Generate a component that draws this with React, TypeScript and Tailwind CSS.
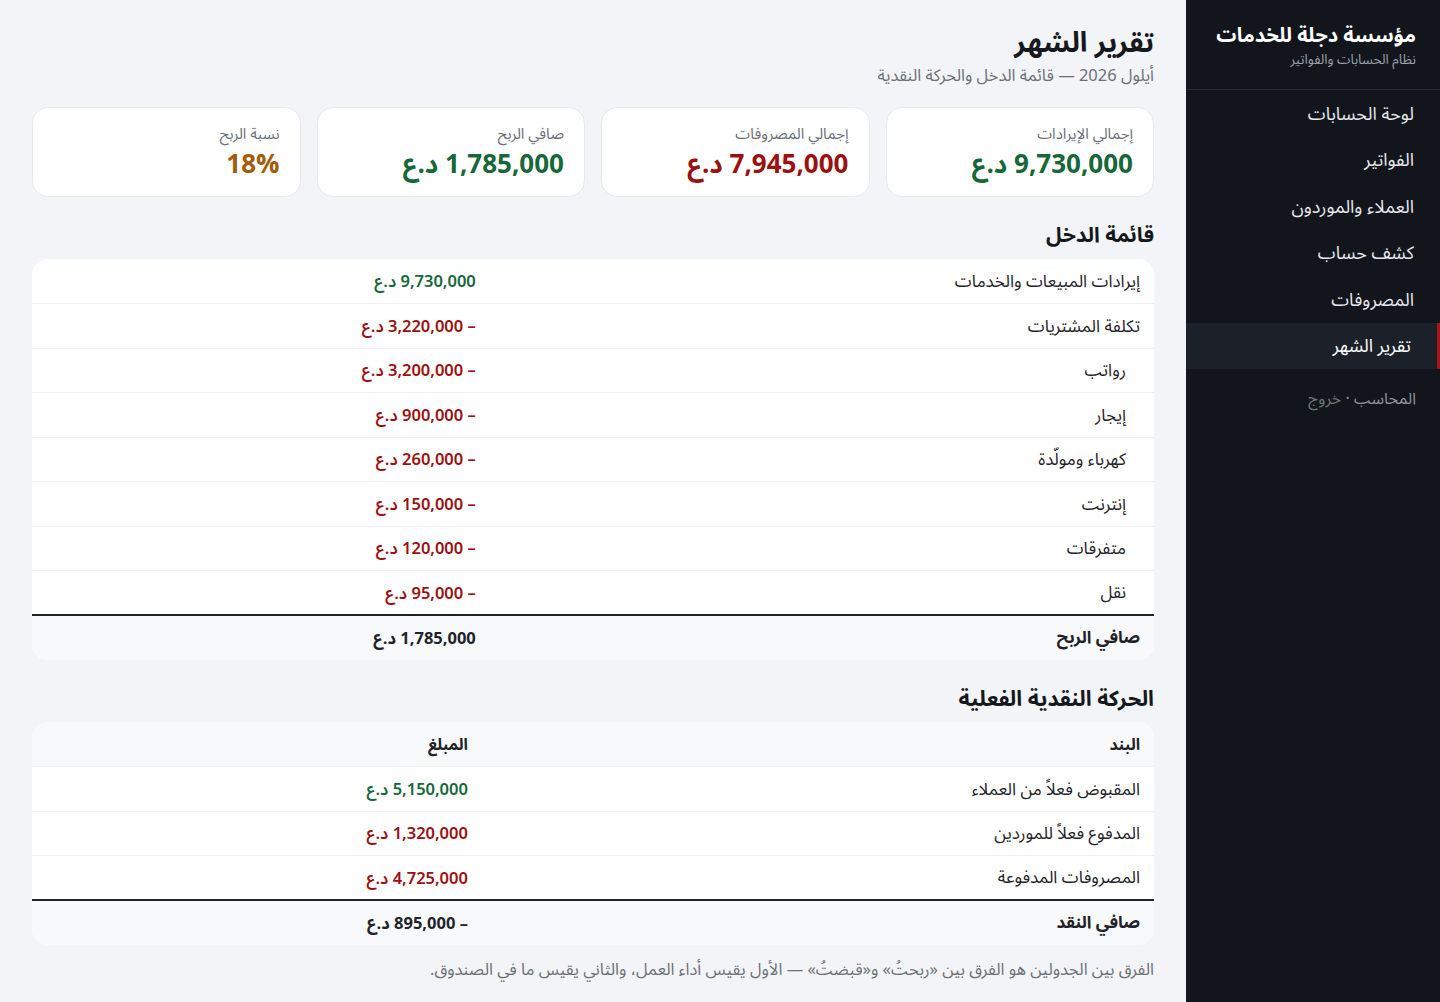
import React from 'react';

type Line = { label: string; amount: string; tone: 'green' | 'red' | 'dark'; sub?: boolean };

const incomeLines: Line[] = [
  { label: 'إيرادات المبيعات والخدمات', amount: '9,730,000 د.ع', tone: 'green' },
  { label: 'تكلفة المشتريات', amount: '– 3,220,000 د.ع', tone: 'red' },
  { label: 'رواتب', amount: '– 3,200,000 د.ع', tone: 'red', sub: true },
  { label: 'إيجار', amount: '– 900,000 د.ع', tone: 'red', sub: true },
  { label: 'كهرباء ومولّدة', amount: '– 260,000 د.ع', tone: 'red', sub: true },
  { label: 'إنترنت', amount: '– 150,000 د.ع', tone: 'red', sub: true },
  { label: 'متفرقات', amount: '– 120,000 د.ع', tone: 'red', sub: true },
  { label: 'نقل', amount: '– 95,000 د.ع', tone: 'red', sub: true },
];

const cashLines: Line[] = [
  { label: 'المقبوض فعلاً من العملاء', amount: '5,150,000 د.ع', tone: 'green' },
  { label: 'المدفوع فعلاً للموردين', amount: '1,320,000 د.ع', tone: 'red' },
  { label: 'المصروفات المدفوعة', amount: '4,725,000 د.ع', tone: 'red' },
];

const stats = [
  { label: 'إجمالي الإيرادات', value: '9,730,000 د.ع', color: 'text-[#17673a]' },
  { label: 'إجمالي المصروفات', value: '7,945,000 د.ع', color: 'text-[#9b1111]' },
  { label: 'صافي الربح', value: '1,785,000 د.ع', color: 'text-[#17673a]' },
  { label: 'نسبة الربح', value: '18%', color: 'text-[#a35c07]' },
];

const nav = ['لوحة الحسابات', 'الفواتير', 'العملاء والموردون', 'كشف حساب', 'المصروفات', 'تقرير الشهر'];

const toneClass = (t: Line['tone']) =>
  t === 'green' ? 'text-[#17673a]' : t === 'red' ? 'text-[#9b1111]' : 'text-[#1f2329]';

const Sidebar: React.FC = () => (
  <aside className="w-[254px] shrink-0 bg-[#12151b] text-[#e6e8ec]">
    <div className="h-[90px] border-b border-white/10 px-6 pt-[22px]">
      <h2 className="text-[20px] font-bold leading-7 text-white">مؤسسة دجلة للخدمات</h2>
      <p className="mt-[2px] text-[13.5px] leading-4 text-[#9aa0a9]">نظام الحسابات والفواتير</p>
    </div>
    <nav>
      {nav.map((item, i) => {
        const active = i === nav.length - 1;
        return (
          <div
            key={item}
            className={`flex h-[46.5px] items-center pr-[26px] pt-[2px] text-[18px] ${
              active ? 'border-r-[3px] border-[#a3161a] bg-[#1c2029] pr-[23px] text-white' : ''
            }`}
          >
            {item}
          </div>
        );
      })}
    </nav>
    <div className="px-6 pt-[18px] text-[16px] text-[#8e949c]">
      المحاسب · <span className="text-[#6a7972]">خروج</span>
    </div>
  </aside>
);

const Row: React.FC<{ line: Line; split: string }> = ({ line, split }) => (
  <tr className="h-[44.5px] border-b border-[#eef0f3]">
    <td className={`${split} pt-[3px] text-[17px] text-[#1f2329] ${line.sub ? 'pr-[28px]' : 'pr-[14px]'}`}>
      {line.label}
    </td>
    <td className={`pr-[14px] pt-[3px] text-[16.5px] font-semibold ${toneClass(line.tone)}`}>{line.amount}</td>
  </tr>
);

const App: React.FC = () => {
  return (
    <div
      dir="rtl"
      className="flex min-h-screen bg-[#f3f4f7]"
      style={{ fontFamily: '"Noto Sans Arabic", "Noto Sans", "DejaVu Sans", sans-serif' }}
    >
      <Sidebar />
      <main className="flex-1 px-8 pt-[26px] pb-6">
        <h1 className="text-[28px] font-bold leading-9 text-[#15181d]">تقرير الشهر</h1>
        <p className="mt-[2px] text-[16.5px] leading-6 text-[#6b7078]">أيلول 2026 — قائمة الدخل والحركة النقدية</p>

        <div className="mt-[19px] grid grid-cols-4 gap-4">
          {stats.map((s) => (
            <div key={s.label} className="h-[90px] rounded-2xl border border-[#e6e8ec] bg-white px-5 pt-[16px]">
              <div className="text-[15px] leading-5 text-[#6b7078]">{s.label}</div>
              <div className={`mt-[5px] text-[26px] font-bold leading-8 ${s.color}`}>{s.value}</div>
            </div>
          ))}
        </div>

        <h3 className="mt-[24px] mb-[10px] text-[21px] font-bold leading-7 text-[#15181d]">قائمة الدخل</h3>
        <div className="overflow-hidden rounded-2xl bg-white">
          <table className="w-full border-collapse text-right">
            <tbody>
              {incomeLines.map((l) => (
                <Row key={l.label} line={l} split="w-[59.2%]" />
              ))}
              <tr className="h-[45px] border-t-2 border-[#1f2329] bg-[#f8f9fb] font-bold text-[#1f2329]">
                <td className="pr-[14px] pt-[2px] text-[17px]">صافي الربح</td>
                <td className="pr-[14px] pt-[2px] text-[16.5px]">1,785,000 د.ع</td>
              </tr>
            </tbody>
          </table>
        </div>

        <h3 className="mt-[25px] mb-[9px] text-[21.5px] font-bold leading-7 text-[#15181d]">الحركة النقدية الفعلية</h3>
        <div className="overflow-hidden rounded-2xl bg-white">
          <table className="w-full border-collapse text-right">
            <thead>
              <tr className="h-[44.5px] border-b border-[#eef0f3] bg-[#f8f9fb] text-[16px] font-bold text-[#1f2329]">
                <th className="w-[59.9%] pr-[14px] pt-[2px] font-bold">البند</th>
                <th className="pr-[14px] pt-[2px] font-bold">المبلغ</th>
              </tr>
            </thead>
            <tbody>
              {cashLines.map((l) => (
                <Row key={l.label} line={l} split="w-[59.9%]" />
              ))}
              <tr className="h-[45px] border-t-2 border-[#1f2329] bg-[#f8f9fb] font-bold text-[#1f2329]">
                <td className="pr-[14px] pt-[2px] text-[17px]">صافي النقد</td>
                <td className="pr-[14px] pt-[2px] text-[16.5px]">– 895,000 د.ع</td>
              </tr>
            </tbody>
          </table>
        </div>

        <p className="mt-[13px] text-[16.5px] text-[#6b7078]">
          الفرق بين الجدولين هو الفرق بين «ربحتُ» و«قبضتُ» — الأول يقيس أداء العمل، والثاني يقيس ما في الصندوق.
        </p>
      </main>
    </div>
  );
};

export default App;
